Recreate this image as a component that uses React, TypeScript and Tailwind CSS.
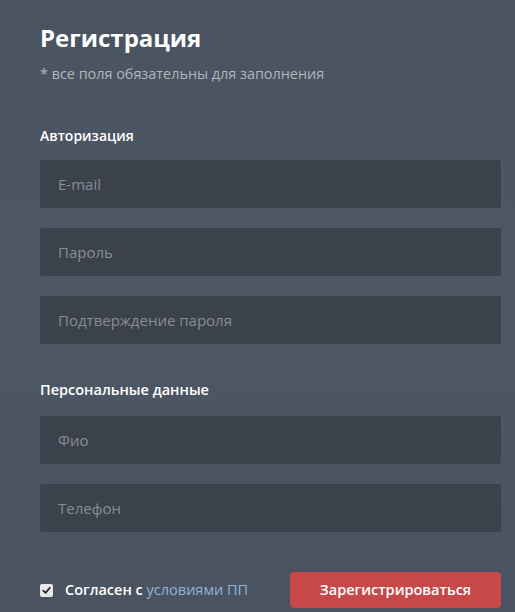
const fields = {
  auth: ["E-mail", "Пароль", "Подтверждение пароля"],
  personal: ["Фио", "Телефон"],
};

const Field = ({ placeholder }: { placeholder: string }) => (
  <input
    type="text"
    placeholder={placeholder}
    className="h-12 w-full rounded-[3px] bg-[#3b424c] px-[18px] text-[15px] text-gray-200 placeholder:text-[#878d96] outline-none"
  />
);

export default function App() {
  return (
    <div className="min-h-screen bg-gradient-to-b from-[#4a5360] via-[#4d5765] to-[#4a535f] pl-10 pr-[14px] pt-[22px] pb-1 font-['Open_Sans',sans-serif]">
      <h1 className="text-[24px] font-bold leading-[32px] text-white">
        Регистрация
      </h1>
      <p className="mt-[11px] text-[14.4px] leading-[18px] text-[#b1b6bd]">
        * все поля обязательны для заполнения
      </p>

      <h2 className="mt-[43px] text-[14px] font-semibold leading-5 text-white">
        Авторизация
      </h2>
      <div className="mt-[14px] flex flex-col gap-5">
        {fields.auth.map((f) => (
          <Field key={f} placeholder={f} />
        ))}
      </div>

      <h2 className="mt-9 text-[14.5px] font-semibold leading-5 text-white">
        Персональные данные
      </h2>
      <div className="mt-4 flex flex-col gap-5">
        {fields.personal.map((f) => (
          <Field key={f} placeholder={f} />
        ))}
      </div>

      <div className="mt-10 flex items-center justify-between">
        <label className="flex items-center gap-3 text-[14.5px] font-semibold text-white">
          <span className="flex h-[13px] w-[13px] items-center justify-center rounded-[2px] bg-[#e8e8e8]">
            <svg viewBox="0 0 12 12" className="h-[11px] w-[11px]">
              <path
                d="M2.5 6.2 L5 8.6 L9.6 3"
                fill="none"
                stroke="#2a2f36"
                strokeWidth="2"
                strokeLinecap="round"
                strokeLinejoin="round"
              />
            </svg>
          </span>
          <span>
            Согласен с{" "}
            <a href="#" className="font-normal text-[#8fb3d9]">
              условиями ПП
            </a>
          </span>
        </label>
        <button className="h-9 w-[211px] rounded-[4px] bg-[#c64848] text-[14.5px] font-semibold text-white">
          Зарегистрироваться
        </button>
      </div>
    </div>
  );
}
